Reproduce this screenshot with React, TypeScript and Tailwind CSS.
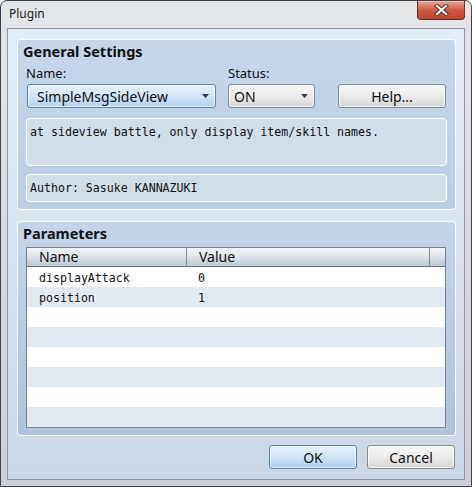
import React from "react";

const rows = [
  { name: "displayAttack", value: "0" },
  { name: "position", value: "1" },
  { name: "", value: "" },
  { name: "", value: "" },
  { name: "", value: "" },
  { name: "", value: "" },
  { name: "", value: "" },
  { name: "", value: "" },
];

function Arrow() {
  return (
    <svg width="7" height="4" viewBox="0 0 7 4" className="shrink-0">
      <path d="M0 0H7L3.5 4Z" fill="#3b3b3b" />
    </svg>
  );
}

function GrayButton({ children, className }: { children: React.ReactNode; className: string }) {
  return (
    <div
      className={
        "h-[24px] flex items-center justify-center rounded-[3px] border border-[#8a8a8a] bg-gradient-to-b from-[#f6f6f6] via-[#ebebeb] to-[#d6d6d6] text-[14px] text-[#111] shadow-[inset_0_0_0_1px_rgba(255,255,255,0.7)] " +
        className
      }
    >
      {children}
    </div>
  );
}

export default function App() {
  return (
    <div className="w-[472px] h-[487px] bg-white font-['Noto_Sans',sans-serif]">
      <div className="w-[472px] h-[487px] flex flex-col rounded-t-[7px] border border-[#3e4248] bg-gradient-to-b from-[#e3e6ea] via-[#d4d9df] to-[#cbd0d7]">
        {/* title bar */}
        <div className="relative h-[27px] shrink-0 pl-[8px] pt-[5px] text-[12px] leading-[16px] text-[#1b1b1b]">
          Plugin
          <div className="absolute right-[6px] top-0 w-[48px] h-[19px] flex items-center justify-center rounded-b-[4px] border border-t-0 border-[#6b2c22] bg-gradient-to-b from-[#e9a797] via-[#d05a44] to-[#c2452e] shadow-[inset_0_1px_0_rgba(255,255,255,0.35)]">
            <svg width="15" height="12" viewBox="0 0 15 12">
              <path d="M3 2L12 10M12 2L3 10" stroke="#4a3530" strokeWidth="4.2" strokeLinecap="square" />
              <path d="M3 2L12 10M12 2L3 10" stroke="#ffffff" strokeWidth="2.2" strokeLinecap="square" />
            </svg>
          </div>
        </div>

        {/* client area */}
        <div className="mx-[6px] h-[452px] shrink-0 flex flex-col border border-[#8d959f] bg-gradient-to-b from-[#e3ecf8] to-[#ccd8e5]">
          {/* General Settings */}
          <div className="ml-[9px] mt-[10px] w-[439px] h-[171px] flex flex-col rounded-[4px] border border-white/90 bg-gradient-to-b from-[#c6d7eb] to-[#bccee3] px-[8px]">
            <div className="mt-[1px] -ml-[3px] h-[20px] text-[14.5px] leading-[20px] font-bold text-[#111]">General Settings</div>
            <div className="flex items-end mt-[4px]">
              <div className="w-[190px] flex flex-col">
                <div className="h-[16px] text-[13px] leading-[16px] text-[#111]">Name:</div>
                <div className="mt-[3px] ml-[1px] w-[189px] h-[24px] flex items-center justify-between pl-[9px] pr-[6px] rounded-[3px] border border-[#5d88ae] bg-gradient-to-b from-[#e6f1fb] via-[#d3e6f7] to-[#b3d3ef] text-[14px] text-[#111] shadow-[inset_0_0_0_1px_rgba(255,255,255,0.6)]">
                  <span>SimpleMsgSideView</span>
                  <Arrow />
                </div>
              </div>
              <div className="ml-[12px] w-[87px] flex flex-col">
                <div className="h-[16px] text-[13px] leading-[16px] text-[#111]">Status:</div>
                <div className="mt-[3px] w-[87px] h-[24px] flex items-center justify-between pl-[5px] pr-[6px] rounded-[3px] border border-[#8a8a8a] bg-gradient-to-b from-[#f6f6f6] via-[#ebebeb] to-[#d6d6d6] text-[14px] text-[#111] shadow-[inset_0_0_0_1px_rgba(255,255,255,0.7)]">
                  <span>ON</span>
                  <Arrow />
                </div>
              </div>
              <GrayButton className="ml-auto mr-[1px] w-[108px]">Help...</GrayButton>
            </div>
            <div className="mt-[10px] h-[48px] rounded-[4px] border border-white bg-[#d1dde9] pl-[3px] pt-[5px] font-['DejaVu_Sans_Mono',monospace] text-[11.6px] leading-[16px] text-[#111]">
              at sideview battle, only display item/skill names.
            </div>
            <div className="mt-[8px] h-[28px] rounded-[4px] border border-white bg-[#d1dde9] pl-[3px] pt-[5px] font-['DejaVu_Sans_Mono',monospace] text-[11.6px] leading-[16px] text-[#111]">
              Author: Sasuke KANNAZUKI
            </div>
          </div>

          {/* Parameters */}
          <div className="ml-[9px] mt-[11px] w-[439px] h-[215px] flex flex-col rounded-[4px] border border-white/90 bg-gradient-to-b from-[#c4d5e9] to-[#b0c3d9] px-[8px]">
            <div className="mt-[1px] -ml-[3px] h-[20px] text-[14.5px] leading-[20px] font-bold text-[#111]">Parameters</div>
            <div className="mt-[4px] w-[420px] h-[181px] flex flex-col border border-[#7b828b] bg-white">
              <div className="h-[19px] flex border-b border-[#6f767e] bg-gradient-to-b from-[#f1f4f8] via-[#dde3ea] to-[#bec6cf] text-[14px] leading-[18px] text-[#111]">
                <div className="w-[160px] pl-[12px] border-r border-[#8b929a]">Name</div>
                <div className="w-[243px] pl-[12px] border-r border-[#8b929a]">Value</div>
                <div className="flex-1"></div>
              </div>
              {rows.map((r, i) => (
                <div
                  key={i}
                  className={
                    "h-[20px] flex pt-[2px] font-['DejaVu_Sans_Mono',monospace] text-[11.6px] leading-[18px] text-[#111] " +
                    (i % 2 === 1 ? "bg-[#e2e9f1]" : "bg-white")
                  }
                >
                  <div className="w-[160px] pl-[12px]">{r.name}</div>
                  <div className="pl-[11px]">{r.value}</div>
                </div>
              ))}
            </div>
          </div>

          {/* buttons */}
          <div className="mt-[9px] flex justify-end gap-[10px] pr-[9px]">
            <div className="w-[88px] h-[24px] flex items-center justify-center rounded-[3px] border border-[#5d88ae] bg-gradient-to-b from-[#e6f1fb] via-[#d0e4f6] to-[#aed0ee] text-[14px] text-[#111] shadow-[inset_0_0_0_1px_rgba(255,255,255,0.6)]">
              OK
            </div>
            <GrayButton className="w-[88px]">Cancel</GrayButton>
          </div>
        </div>
      </div>
    </div>
  );
}
